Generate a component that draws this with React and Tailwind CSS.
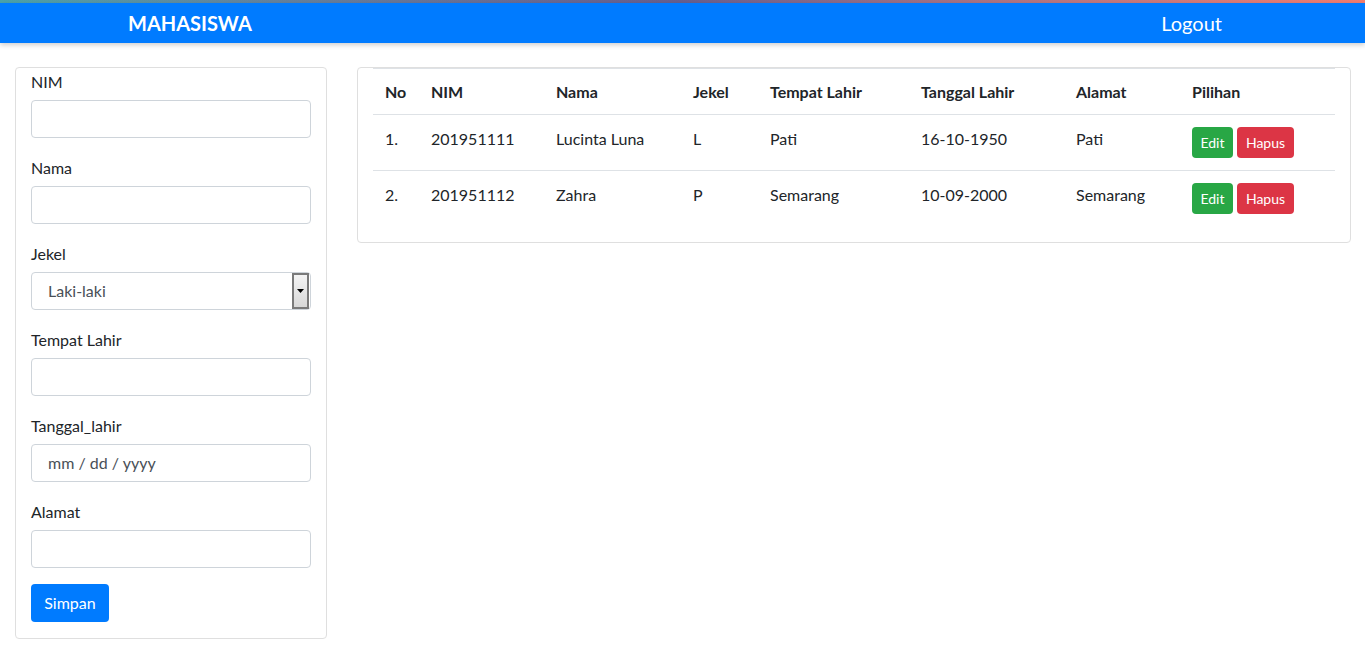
const ROWS = [
  { no: '1.', nim: '201951111', nama: 'Lucinta Luna', jekel: 'L', tempat: 'Pati', tgl: '16-10-1950', alamat: 'Pati' },
  { no: '2.', nim: '201951112', nama: 'Zahra', jekel: 'P', tempat: 'Semarang', tgl: '10-09-2000', alamat: 'Semarang' },
];

const COLS = [
  { label: 'No', w: 'w-[46px]' },
  { label: 'NIM', w: 'w-[125px]' },
  { label: 'Nama', w: 'w-[137px]' },
  { label: 'Jekel', w: 'w-[77px]' },
  { label: 'Tempat Lahir', w: 'w-[151px]' },
  { label: 'Tanggal Lahir', w: 'w-[155px]' },
  { label: 'Alamat', w: 'w-[116px]' },
  { label: 'Pilihan', w: '' },
];

function Field({ label, children }) {
  return (
    <div className="mb-4">
      <label className="block leading-6 pt-[2px] mb-[6px]">{label}</label>
      {children}
    </div>
  );
}

function TextInput() {
  return <div className="h-[38px] border border-[#ced4da] rounded bg-white" />;
}

export default function App() {
  return (
    <div className="min-h-[651px] bg-white text-[#212529] text-[16px] font-['Segoe_UI','Lato','Noto_Sans',sans-serif]">
      {/* browser strip */}
      <div className="h-[3px] bg-gradient-to-r from-[#4aa3aa] via-[#8a6a9a] to-[#f6a860]">
        <div className="h-full bg-gradient-to-r from-transparent via-[#2f4f7f]/40 to-[#ef5f7a]/60" />
      </div>

      {/* navbar */}
      <nav className="h-10 bg-[#007bff] shadow-[0_2px_5px_rgba(0,0,0,0.2)] flex items-center justify-between pl-[128px] pr-[143px] relative">
        <span className="text-white font-bold text-[20px]">MAHASISWA</span>
        <span className="text-white text-[20px]">Logout</span>
      </nav>

      <div className="flex items-start gap-[30px] pl-[15px] pr-[14px] pt-6">
        {/* form card */}
        <div className="w-[312px] shrink-0 border border-[#dfdfdf] rounded px-[15px] pb-4">
          <Field label="NIM"><TextInput /></Field>
          <Field label="Nama"><TextInput /></Field>
          <Field label="Jekel">
            <div className="h-[38px] border border-[#ced4da] rounded bg-white flex items-center pl-4 pr-px text-[#495057]">
              <span className="flex-1">Laki-laki</span>
              <div className="w-[17px] h-[36px] border-2 border-[#7a7a7a] bg-gradient-to-b from-[#f4f4f4] to-[#d8d8d8] flex items-center justify-center">
                <svg width="7" height="4" viewBox="0 0 7 4"><path d="M0 0h7L3.5 4z" fill="#000" /></svg>
              </div>
            </div>
          </Field>
          <Field label="Tempat Lahir"><TextInput /></Field>
          <Field label="Tanggal_lahir">
            <div className="h-[38px] border border-[#ced4da] rounded bg-white flex items-center pl-4 text-[#495057]">
              mm / dd / yyyy
            </div>
          </Field>
          <Field label="Alamat"><TextInput /></Field>
          <button className="h-[38px] w-[78px] rounded bg-[#007bff] text-white">Simpan</button>
        </div>

        {/* table card */}
        <div className="flex-1 border border-[#dfdfdf] rounded px-[15px] pb-4">
          <table className="w-full border-collapse text-left">
            <thead>
              <tr className="border-t border-t-[#dee2e6] border-b border-b-[#dee2e6]">
                {COLS.map((c) => (
                  <th key={c.label} className={`${c.w} px-3 pt-[11px] pb-[10px] font-bold leading-6`}>{c.label}</th>
                ))}
              </tr>
            </thead>
            <tbody>
              {ROWS.map((r, i) => (
                <tr key={r.nim} className={i === 0 ? 'border-b border-[#dee2e6]' : ''}>
                  <td className="px-3 pt-3 pb-3 align-top leading-6">{r.no}</td>
                  <td className="px-3 pt-3 pb-3 align-top leading-6">{r.nim}</td>
                  <td className="px-3 pt-3 pb-3 align-top leading-6">{r.nama}</td>
                  <td className="px-3 pt-3 pb-3 align-top leading-6">{r.jekel}</td>
                  <td className="px-3 pt-3 pb-3 align-top leading-6">{r.tempat}</td>
                  <td className="px-3 pt-3 pb-3 align-top leading-6">{r.tgl}</td>
                  <td className="px-3 pt-3 pb-3 align-top leading-6">{r.alamat}</td>
                  <td className="px-3 pt-3 pb-3 align-top">
                    <div className="flex gap-1">
                      <button className="h-[31px] w-[41px] rounded bg-[#28a745] text-white text-[14px]">Edit</button>
                      <button className="h-[31px] w-[57px] rounded bg-[#dc3545] text-white text-[14px]">Hapus</button>
                    </div>
                  </td>
                </tr>
              ))}
            </tbody>
          </table>
        </div>
      </div>
    </div>
  );
}
